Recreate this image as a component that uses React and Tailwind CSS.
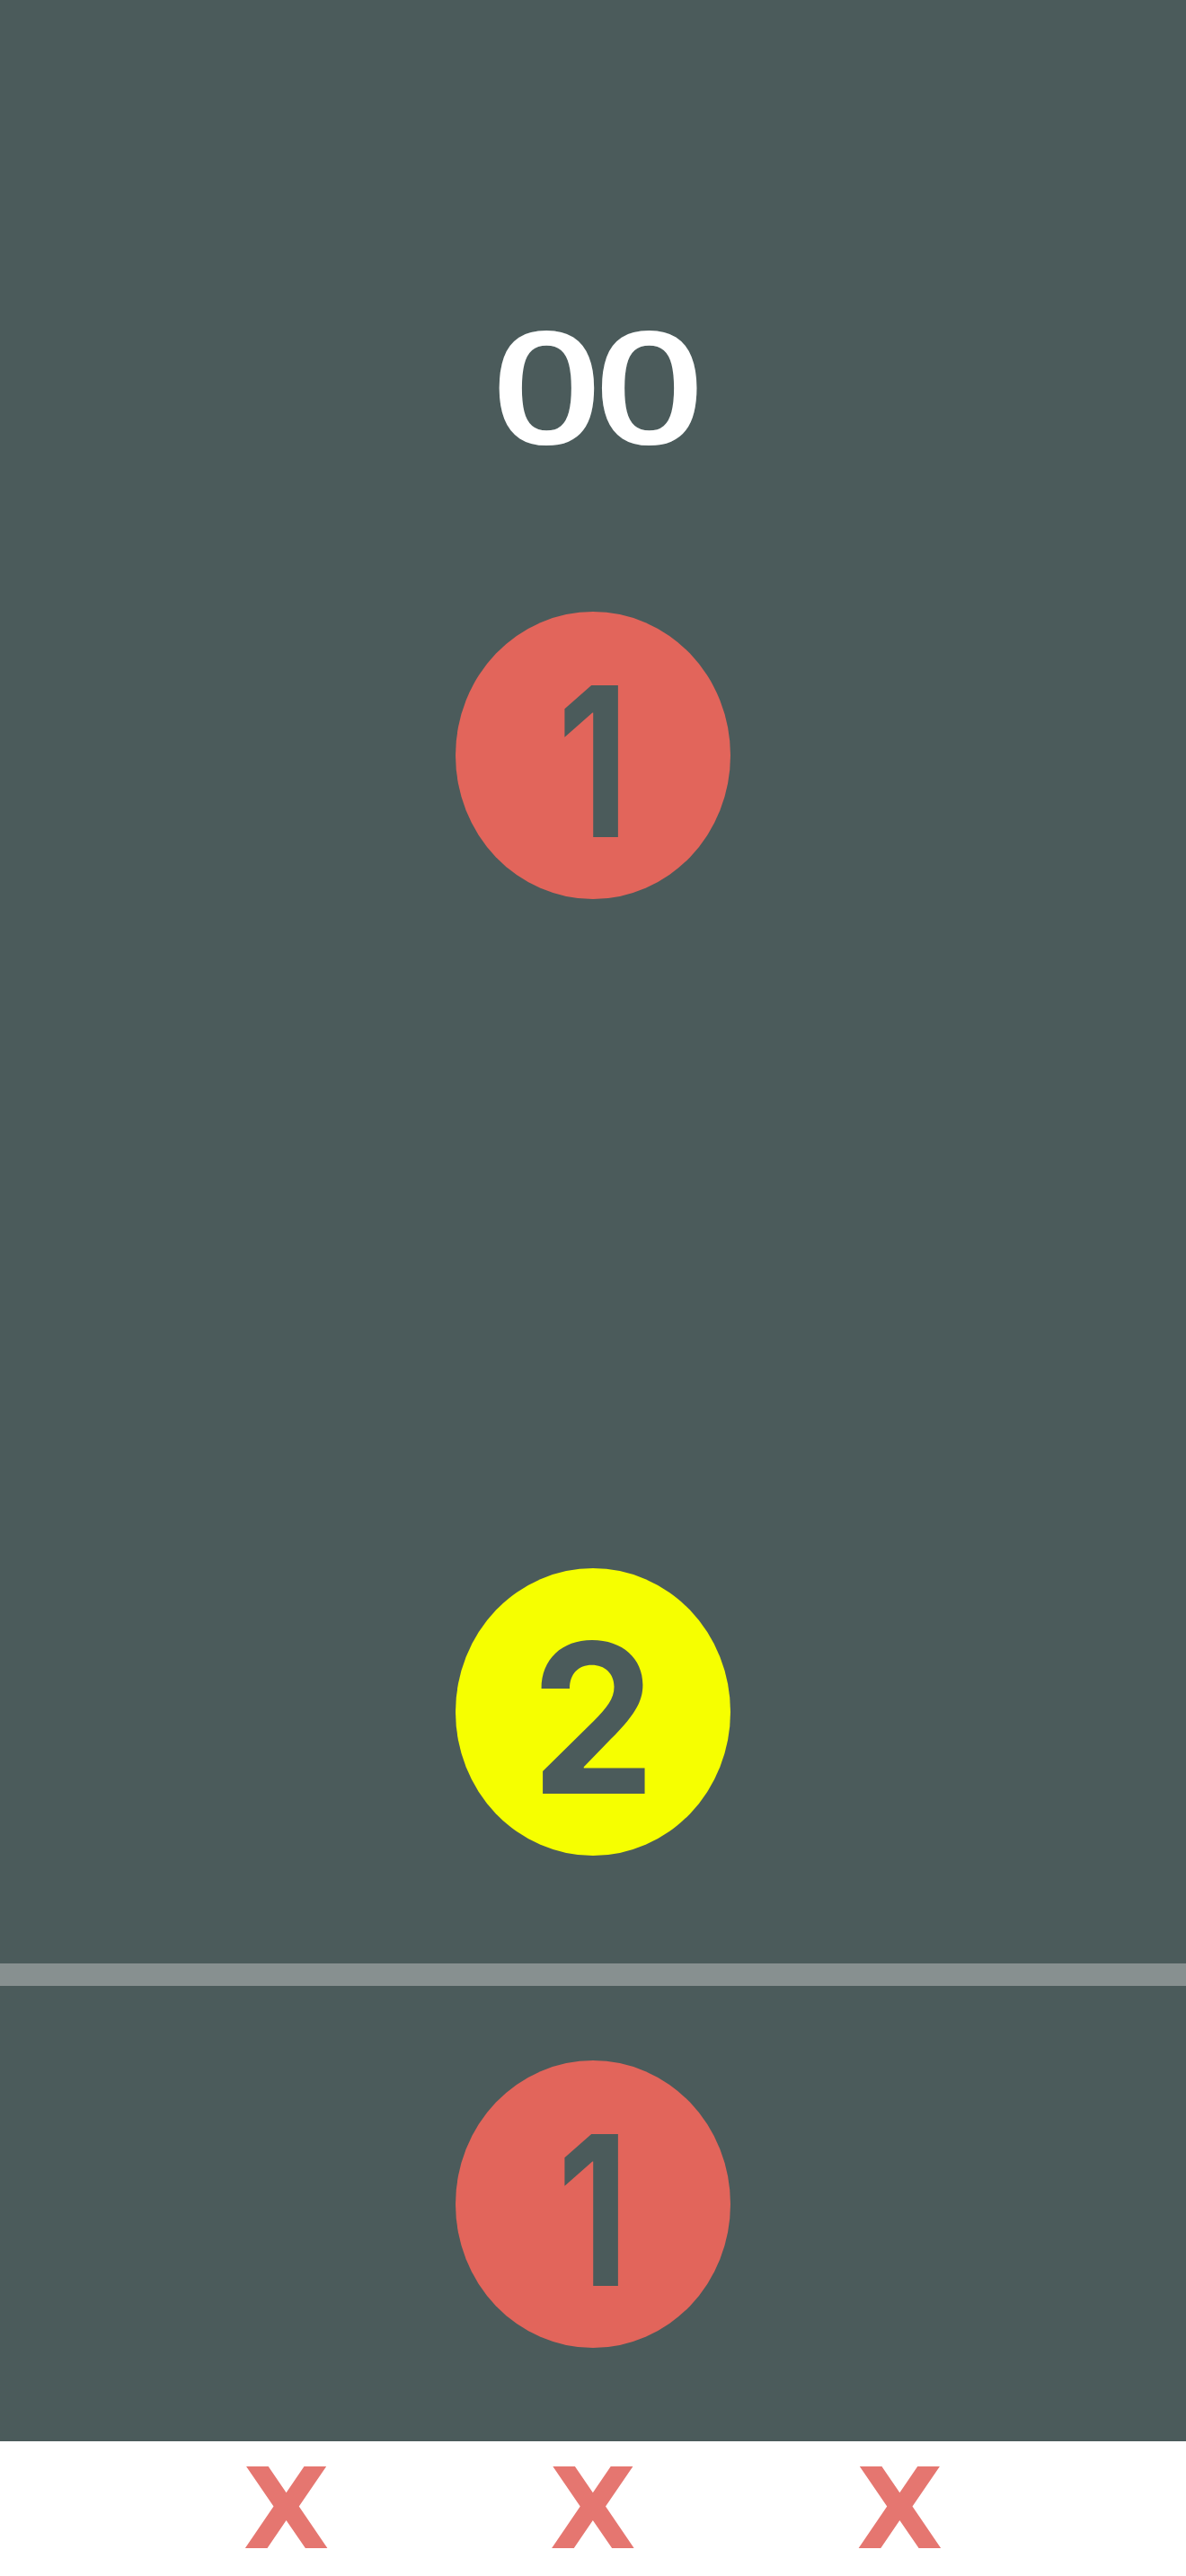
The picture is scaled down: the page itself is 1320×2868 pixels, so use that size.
import React from 'react'

const DIGIT_FONT = { fontFamily: 'Inter, "Noto Sans", sans-serif' }

function Ball({ n, color, squeeze }) {
  return (
    <div className={`w-[306px] h-[320px] rounded-[50%] flex items-center justify-center ${color}`}>
      <span className={`inline-block text-[232px] leading-none font-bold text-[#4b5b5b] pt-[14px] ${squeeze}`} style={DIGIT_FONT}>
        {n}
      </span>
    </div>
  )
}

function Miss() {
  return (
    <span className="text-[125px] leading-none font-bold text-[#e57670]" style={{ fontFamily: '"DejaVu Sans", sans-serif' }}>
      X
    </span>
  )
}

export default function App() {
  return (
    <div className="w-[1320px] min-h-[2868px] bg-white">
      <section className="h-[2186px] bg-[#4b5b5b] flex flex-col items-center">
        <div className="mt-[340px] inline-block text-[174px] leading-none font-semibold tracking-[-8px] text-white scale-x-[1.25]" style={{ fontFamily: '"Open Sans", sans-serif' }}>
          00
        </div>
        <div className="mt-[167px]">
          <Ball n="1" color="bg-[#e2655b]" squeeze="scale-x-[0.8]" />
        </div>
        <div className="mt-[745px]">
          <Ball n="2" color="bg-[#f6ff00]" squeeze="scale-x-[0.95]" />
        </div>
      </section>

      <div className="h-[25px] bg-[#879090]" />

      <section className="h-[507px] bg-[#4b5b5b] flex justify-center pt-[83px]">
        <Ball n="1" color="bg-[#e2655b]" squeeze="scale-x-[0.8]" />
      </section>

      <footer className="h-[150px] px-[148px] grid grid-cols-3 items-center justify-items-center">
        <Miss />
        <Miss />
        <Miss />
      </footer>
    </div>
  )
}
